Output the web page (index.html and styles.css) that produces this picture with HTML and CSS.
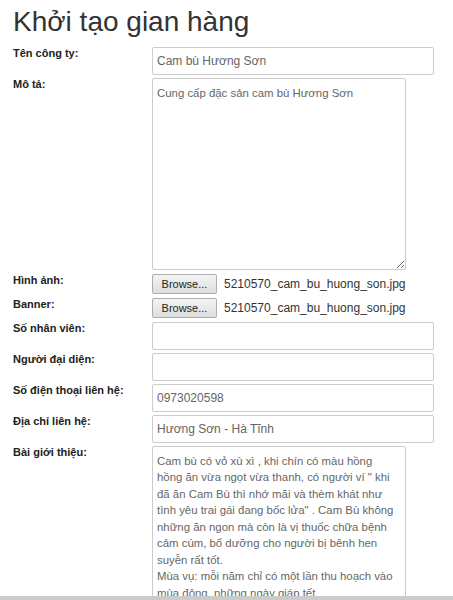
FILE: index.html
```html
<!DOCTYPE html>
<html lang="vi">
<head>
<meta charset="utf-8">
<title>Khởi tạo gian hàng</title>
<link rel="stylesheet" href="styles.css">
</head>
<body>
<div class="page">
  <h1 class="title">Khởi tạo gian hàng</h1>
  <form class="form">
    <div class="row">
      <label class="label">Tên công ty:</label>
      <input class="input" type="text" value="Cam bù Hương Sơn">
    </div>
    <div class="row">
      <label class="label">Mô tả:</label>
      <textarea class="area area-short">Cung cấp đặc sản cam bù Hương Sơn</textarea>
    </div>
    <div class="row row-file">
      <label class="label">Hình ảnh:</label>
      <div class="file">
        <button class="browse" type="button">Browse...</button>
        <span class="filename">5210570_cam_bu_huong_son.jpg</span>
      </div>
    </div>
    <div class="row row-file">
      <label class="label">Banner:</label>
      <div class="file">
        <button class="browse" type="button">Browse...</button>
        <span class="filename">5210570_cam_bu_huong_son.jpg</span>
      </div>
    </div>
    <div class="row row-after-file">
      <label class="label">Số nhân viên:</label>
      <input class="input" type="text" value="">
    </div>
    <div class="row">
      <label class="label">Người đại diện:</label>
      <input class="input" type="text" value="">
    </div>
    <div class="row">
      <label class="label">Số điện thoại liên hệ:</label>
      <input class="input" type="text" value="0973020598">
    </div>
    <div class="row">
      <label class="label">Địa chỉ liên hệ:</label>
      <input class="input" type="text" value="Hương Sơn - Hà Tĩnh">
    </div>
    <div class="row">
      <label class="label">Bài giới thiệu:</label>
      <textarea class="area area-long">Cam bù có vỏ xù xì , khi chín có màu hồng
hồng ăn vừa ngọt vừa thanh, có người ví " khi
đã ăn Cam Bù thì nhớ mãi và thèm khát như
tình yêu trai gái đang bốc lửa" . Cam Bù không
những ăn ngon mà còn là vị thuốc chữa bệnh
cảm cúm, bổ dưỡng cho người bị bênh hen
suyễn rất tốt.
Mùa vụ: mỗi năm chỉ có một lần thu hoạch vào
mùa đông, những ngày giáp tết.</textarea>
    </div>
  </form>
</div>
<div class="bottom-bar"></div>
</body>
</html>
```

FILE: styles.css
```css
html, body {
  margin: 0;
  padding: 0;
  height: 600px;
  overflow: hidden;
  background: #fff;
}

body {
  font-family: "Liberation Sans", Arial, sans-serif;
  color: #333;
}

.page {
  padding: 0 13px;
}

.title {
  margin: 7px 0 9px;
  font-size: 28px;
  font-weight: normal;
  line-height: 1.1;
  color: #333;
}

.form {
  display: flex;
  flex-direction: column;
  gap: 3px;
}

.row {
  display: flex;
  align-items: flex-start;
}

.row-file {
  margin-top: 1px;
}

.row-after-file {
  margin-top: 1px;
}

.label {
  width: 139px;
  flex: none;
  font-size: 11px;
  font-weight: bold;
  line-height: normal;
  color: #222;
}

.input {
  box-sizing: border-box;
  width: 282px;
  height: 28px;
  margin: 0;
  padding: 0 4px;
  border: 1px solid #ccc;
  border-radius: 2px;
  font-family: "Liberation Sans", Arial, sans-serif;
  font-size: 12px;
  color: #666;
  background: #fff;
  outline: none;
}

.area {
  box-sizing: border-box;
  width: 254px;
  margin: 0;
  padding: 6px 4px;
  border: 1px solid #ccc;
  border-radius: 2px;
  font-family: "Liberation Sans", Arial, sans-serif;
  font-size: 11.4px;
  line-height: 16.5px;
  color: #666;
  background: #fff;
  outline: none;
  overflow: hidden;
}

.area-short {
  height: 192px;
}

.area-long {
  height: 220px;
  white-space: pre;
}

.file {
  display: flex;
  align-items: center;
  gap: 7px;
  height: 20px;
}

.browse {
  box-sizing: border-box;
  width: 65px;
  height: 20px;
  margin: 0;
  padding: 0;
  border: 1px solid #adadad;
  border-radius: 2px;
  background: linear-gradient(#f4f4f4, #dedede);
  font-family: "Liberation Sans", Arial, sans-serif;
  font-size: 11px;
  color: #222;
}

.filename {
  font-size: 12px;
  color: #333;
}

.bottom-bar {
  position: fixed;
  left: 0;
  right: 0;
  bottom: 0;
  height: 4px;
  background: #cbcbcb;
}
```
